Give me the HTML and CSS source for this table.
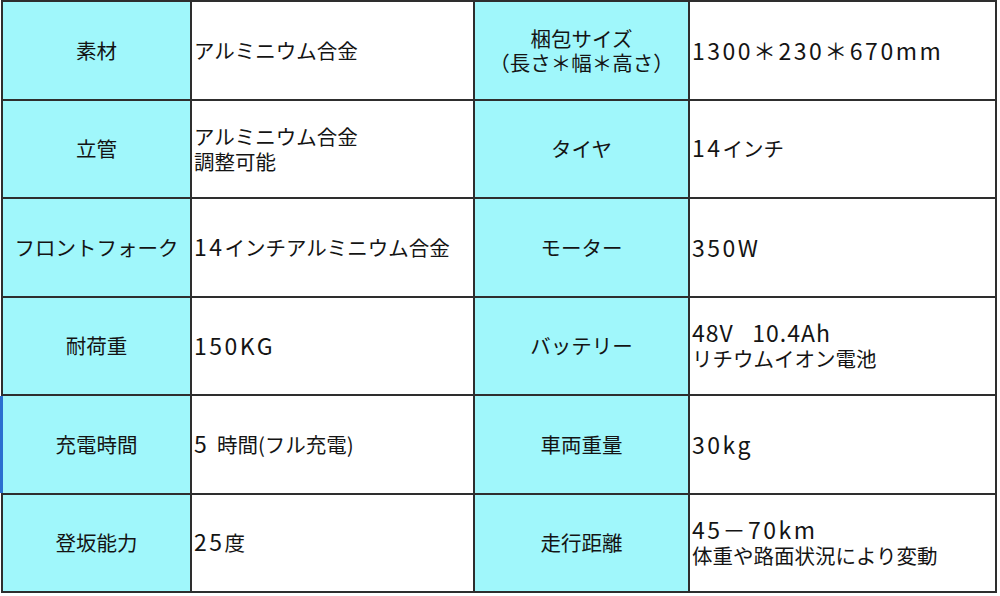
FILE: index.html
```html
<!DOCTYPE html>
<html lang="ja">
<head>
<meta charset="utf-8">
<link rel="stylesheet" href="styles.css">
</head>
<body>
<div class="spec">
  <div class="cell label">素材</div>
  <div class="cell value">アルミニウム合金</div>
  <div class="cell label">梱包サイズ<br>（長さ＊幅＊高さ）</div>
  <div class="cell value"><span class="lat">1300＊230＊670mm</span></div>

  <div class="cell label">立管</div>
  <div class="cell value">アルミニウム合金<br>調整可能</div>
  <div class="cell label">タイヤ</div>
  <div class="cell value"><span><span class="lat">14</span>インチ</span></div>

  <div class="cell label">フロントフォーク</div>
  <div class="cell value"><span><span class="lat">14</span>インチアルミニウム合金</span></div>
  <div class="cell label">モーター</div>
  <div class="cell value"><span class="lat">350W</span></div>

  <div class="cell label">耐荷重</div>
  <div class="cell value"><span class="lat">150KG</span></div>
  <div class="cell label">バッテリー</div>
  <div class="cell value"><span><span class="lat tight">48V&nbsp;&nbsp;&nbsp;10.4Ah</span><br>リチウムイオン電池</span></div>

  <div class="cell label mark">充電時間</div>
  <div class="cell value"><span><span class="lat">5 </span>時間(フル充電)</span></div>
  <div class="cell label">車両重量</div>
  <div class="cell value"><span class="lat">30kg</span></div>

  <div class="cell label">登坂能力</div>
  <div class="cell value"><span><span class="lat">25</span>度</span></div>
  <div class="cell label">走行距離</div>
  <div class="cell value"><span><span class="lat">45－70km</span><br>体重や路面状況により変動</span></div>
</div>
</body>
</html>
```

FILE: styles.css
```css
html, body {
  margin: 0;
  padding: 0;
  background: #ffffff;
}

body {
  width: 1000px;
  height: 596px;
  overflow: hidden;
  font-family: "Noto Sans CJK JP", "Noto Sans", sans-serif;
  color: #141414;
}

.spec {
  display: grid;
  grid-template-columns: 187px 281px 213px 305px;
  grid-template-rows: repeat(6, 96.5px);
  gap: 2px;
  padding: 2px;
  width: max-content;
  margin-left: 1px;
  background: #2e2e2e;
}

.cell {
  display: flex;
  align-items: center;
  font-size: 20.5px;
  line-height: 1.2;
  position: relative;
}

.label {
  background: #a0f7fb;
  justify-content: center;
  text-align: center;
}

.value {
  background: #ffffff;
  justify-content: flex-start;
  padding-left: 2px;
}

.lat {
  font-size: 23px;
  letter-spacing: 2.5px;
  line-height: 1;
}

.lat.tight {
  letter-spacing: 1px;
}

.mark {
  box-shadow: -3px 0 0 #2a6fd0;
}
```
